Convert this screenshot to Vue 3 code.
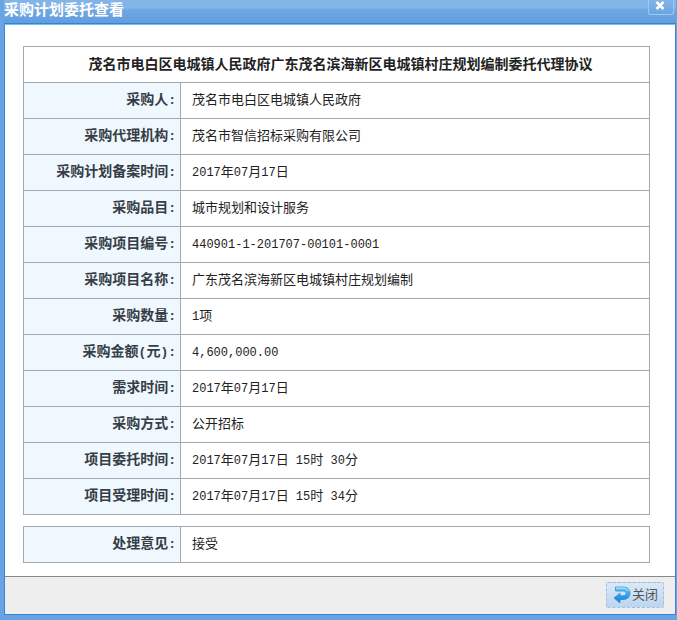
<template>
  <section v-if="visible" class="dialog" role="dialog" aria-labelledby="dialog-title">
    <header class="dialog-header">
      <h1 id="dialog-title" class="dialog-title">采购计划委托查看</h1>
      <button type="button" class="dialog-x" aria-label="关闭窗口" @click="close">
        <svg width="10" height="9" viewBox="0 0 10 9" aria-hidden="true">
          <path d="M1.5 1L8.500 8M8.500 1L1.500 8" stroke="#fff" stroke-width="2.6" />
        </svg>
      </button>
    </header>

    <main class="dialog-body">
      <table class="info-table">
        <colgroup>
          <col class="label-col" />
          <col />
        </colgroup>
        <thead>
          <tr>
            <th class="info-heading" colspan="2">茂名市电白区电城镇人民政府广东茂名滨海新区电城镇村庄规划编制委托代理协议</th>
          </tr>
        </thead>
        <tbody>
          <tr v-for="row in rows" :key="row.label">
            <th scope="row" class="info-label">
              <span v-for="(part, i) in splitText(row.label + ':')" :key="i" :class="{ latin: part.latin }">{{ part.text }}</span>
            </th>
            <td class="info-value">
              <span v-for="(part, i) in splitText(row.value)" :key="i" :class="{ latin: part.latin }">{{ part.text }}</span>
            </td>
          </tr>
        </tbody>
      </table>

      <table class="info-table">
        <colgroup>
          <col class="label-col" />
          <col />
        </colgroup>
        <tbody>
          <tr>
            <th scope="row" class="info-label">处理意见<span class="latin">:</span></th>
            <td class="info-value">接受</td>
          </tr>
        </tbody>
      </table>
    </main>

    <footer class="dialog-footer">
      <button type="button" class="close-button" @click="close">
        <svg width="18" height="18" viewBox="0 0 18 18" aria-hidden="true">
          <defs>
            <linearGradient id="arrow-fill" x1="0" y1="0" x2="0" y2="1">
              <stop offset="0" stop-color="#7ccbf8" />
              <stop offset="0.5" stop-color="#35a4ee" />
              <stop offset="1" stop-color="#1673cf" />
            </linearGradient>
          </defs>
          <path
            d="M2.500 1H10c4.500 0 7 2.600 7 6.200s-2.500 6.300-7 6.300H7v3.500L1 12l6-5v2.700h3c1.900 0 3-.9 3-2.300S11.900 5 10 5H2.500z"
            fill="url(#arrow-fill)"
            stroke="#2788d8"
            stroke-width="0.7"
            stroke-linejoin="round"
          />
          <path d="M3 2h7c2.800 0 4.800 1.200 5.500 3.200" fill="none" stroke="#b9e6fd" stroke-width="1" />
        </svg>
        <span>关闭</span>
      </button>
    </footer>
  </section>
</template>

<script setup>
import { ref } from 'vue'

const visible = ref(true)

const rows = [
  { label: '采购人', value: '茂名市电白区电城镇人民政府' },
  { label: '采购代理机构', value: '茂名市智信招标采购有限公司' },
  { label: '采购计划备案时间', value: '2017年07月17日' },
  { label: '采购品目', value: '城市规划和设计服务' },
  { label: '采购项目编号', value: '440901-1-201707-00101-0001' },
  { label: '采购项目名称', value: '广东茂名滨海新区电城镇村庄规划编制' },
  { label: '采购数量', value: '1项' },
  { label: '采购金额(元)', value: '4,600,000.00' },
  { label: '需求时间', value: '2017年07月17日' },
  { label: '采购方式', value: '公开招标' },
  { label: '项目委托时间', value: '2017年07月17日 15时 30分' },
  { label: '项目受理时间', value: '2017年07月17日 15时 34分' }
]

// digits and punctuation are set one step smaller than the Chinese text
const splitText = (text) => {
  return text.match(/[\x20-\x7e]+|[^\x20-\x7e]+/g).map((part) => ({
    text: part,
    latin: /^[\x20-\x7e]/.test(part)
  }))
}

const close = () => {
  visible.value = false
}
</script>

<style>
body {
  margin: 0;
  background: #fff;
}
</style>

<style scoped>
.dialog {
  min-height: 100vh;
  box-sizing: border-box;
  display: flex;
  flex-direction: column;
  border: solid #68a3e3;
  border-width: 0 1px 5px 4px;
  background: #68a3e3;
  box-shadow: inset 0 -1px #8fc0f0;
  font-family: "Liberation Mono", "Noto Sans CJK SC", monospace;
}

.dialog-header {
  height: 23px;
  display: flex;
  align-items: flex-start;
  justify-content: space-between;
  background: linear-gradient(#83b4e7 0, #83b4e7 8px, #6fa7e2 10px, #619de0 100%);
  border-bottom: 1px solid #3c7fcd;
}

.dialog-title {
  margin: 0;
  color: #fff;
  font-size: 15px;
  line-height: 24px;
  font-weight: 700;
}

.dialog-x {
  width: 26px;
  height: 15px;
  box-sizing: border-box;
  display: flex;
  align-items: center;
  justify-content: center;
  margin-right: 2px;
  padding: 0 2px 3px 0;
  border: 1px solid #9ccbf5;
  border-top: 0;
  border-radius: 0 0 3px 3px;
  background: linear-gradient(#83b4e7, #6aa4e2);
  cursor: pointer;
}

.dialog-body {
  flex: 1;
  display: flex;
  flex-direction: column;
  gap: 11px;
  padding: 21px 25px 13px 18px;
  border: solid #3f82cf;
  border-width: 0 1px;
  border-top: 1px solid #67c4f3;
  background: #fff;
}

.info-table {
  width: 100%;
  border-collapse: collapse;
  table-layout: fixed;
}

.label-col {
  width: 157px;
}

.info-table th,
.info-table td {
  box-sizing: border-box;
  height: 36px;
  border: 1px solid #a0aab0;
  line-height: 20px;
}

.info-table .info-heading {
  padding: 0 0 0 8px;
  color: #222;
  font-size: 14px;
  text-align: center;
}

.info-table .info-label {
  padding: 0 4px 0 0;
  color: #363d45;
  background: #f0f8ff;
  font-size: 14px;
  text-align: right;
}

.info-table .info-value {
  padding: 0 11px;
  color: #222;
  font-size: 13px;
}

.latin {
  white-space: pre;
}

.info-label .latin {
  font-size: 13px;
}

.info-value .latin {
  font-size: 12px;
}

.dialog-footer {
  display: flex;
  justify-content: flex-end;
  padding: 5px 11px 6px;
  border: 1px solid #3f82cf;
  border-top-color: #888;
  background: #eee;
}

.close-button {
  height: 26px;
  box-sizing: border-box;
  display: flex;
  align-items: center;
  gap: 1px;
  padding: 0 5px 0 6px;
  border: 1px dashed #9dbfe3;
  border-radius: 2px;
  color: #555;
  background: linear-gradient(#dbe8f6, #bdd5ef);
  font-family: "Liberation Sans", "Noto Sans CJK SC", sans-serif;
  font-size: 13px;
  line-height: 20px;
  cursor: pointer;
}
</style>
